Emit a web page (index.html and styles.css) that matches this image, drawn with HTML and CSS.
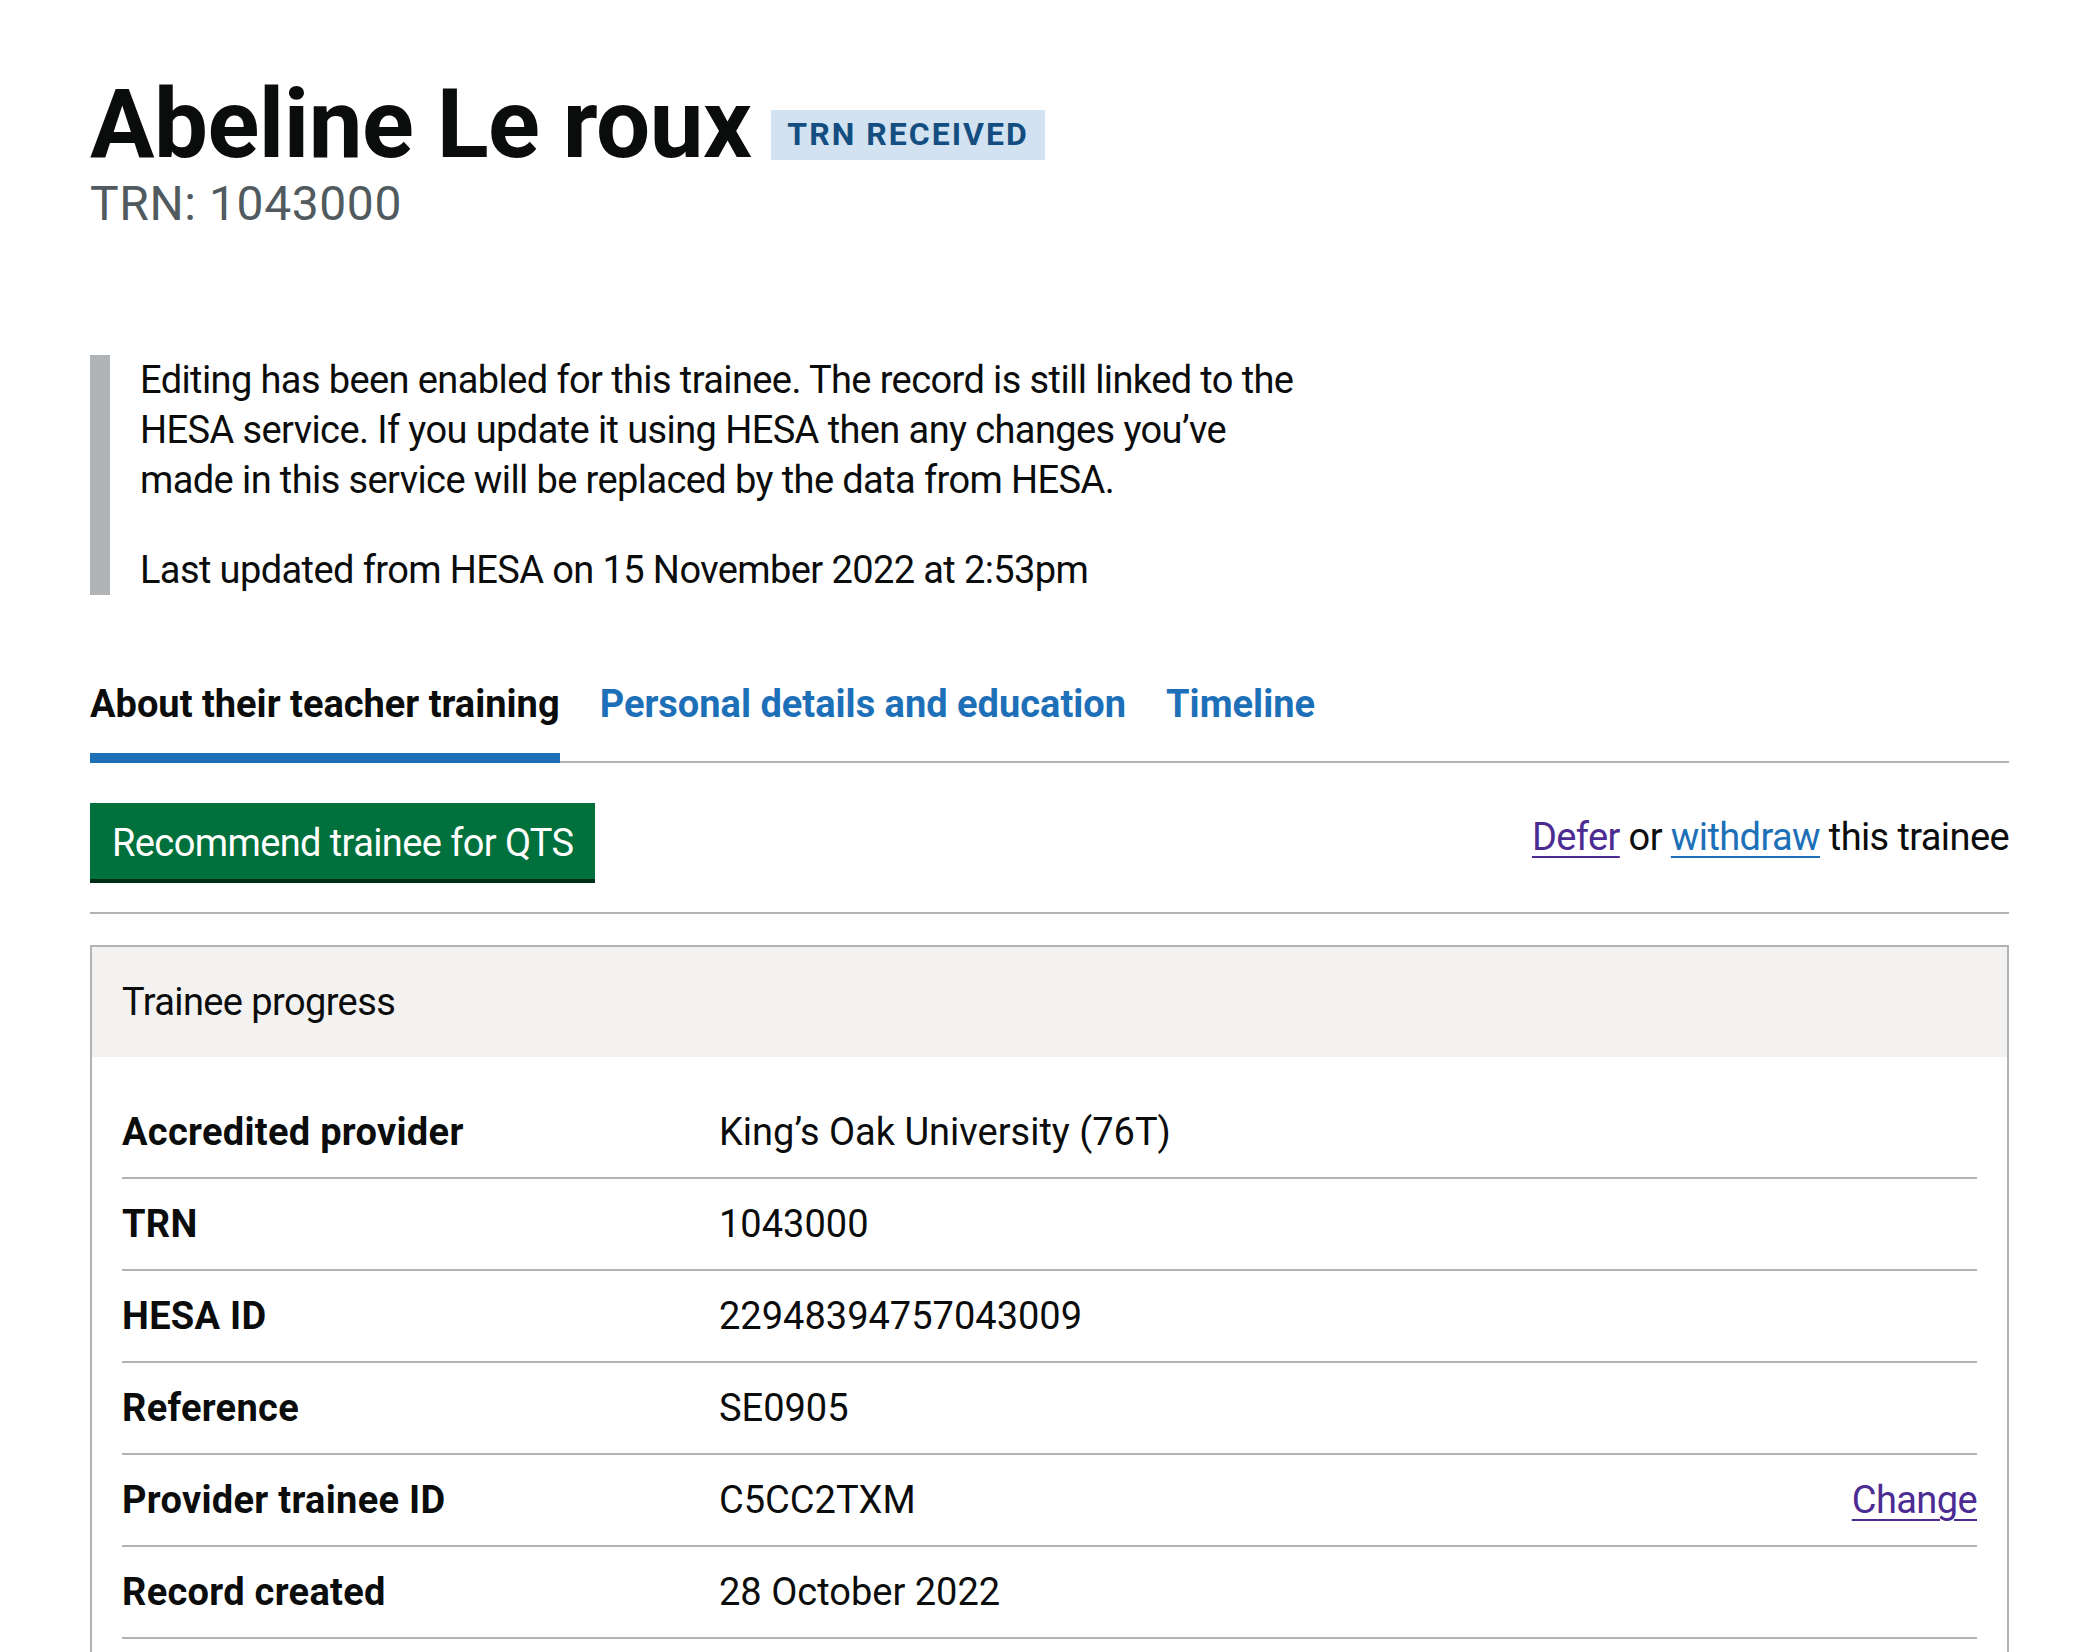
FILE: index.html
```html
<!DOCTYPE html>
<html lang="en">
<head>
<meta charset="utf-8">
<title>Abeline Le roux – Register trainee teachers</title>
<link rel="stylesheet" href="styles.css">
</head>
<body>
<main class="page">
  <header class="record-header">
    <h1 class="record-title"><span class="record-name">Abeline Le roux</span><strong class="tag">TRN received</strong></h1>
    <p class="caption">TRN: 1043000</p>
  </header>

  <div class="inset">
    <p class="inset-para">Editing has been enabled for this trainee. The record is still linked to the HESA service. If you update it using HESA then any changes you’ve made in this service will be replaced by the data from HESA.</p>
    <p class="inset-para">Last updated from HESA on 15 November 2022 at 2:53pm</p>
  </div>

  <nav class="subnav" aria-label="Trainee record">
    <ul class="subnav-list">
      <li class="subnav-item"><a class="subnav-link is-current" href="#" aria-current="page">About their teacher training</a></li>
      <li class="subnav-item"><a class="subnav-link" href="#">Personal details and education</a></li>
      <li class="subnav-item"><a class="subnav-link" href="#">Timeline</a></li>
    </ul>
  </nav>

  <div class="actions">
    <button class="button" type="button">Recommend trainee for QTS</button>
    <p class="actions-text"><a class="link link-visited" href="#">Defer</a> or <a class="link" href="#">withdraw</a> this trainee</p>
  </div>

  <hr class="divider">

  <section class="card">
    <div class="card-header">
      <h2 class="card-title">Trainee progress</h2>
    </div>
    <div class="card-body">
      <dl class="summary">
        <div class="summary-row">
          <dt class="summary-key">Accredited provider</dt>
          <dd class="summary-value">King’s Oak University (76T)</dd>
          <dd class="summary-actions"></dd>
        </div>
        <div class="summary-row">
          <dt class="summary-key">TRN</dt>
          <dd class="summary-value">1043000</dd>
          <dd class="summary-actions"></dd>
        </div>
        <div class="summary-row">
          <dt class="summary-key">HESA ID</dt>
          <dd class="summary-value">22948394757043009</dd>
          <dd class="summary-actions"></dd>
        </div>
        <div class="summary-row">
          <dt class="summary-key">Reference</dt>
          <dd class="summary-value">SE0905</dd>
          <dd class="summary-actions"></dd>
        </div>
        <div class="summary-row">
          <dt class="summary-key">Provider trainee ID</dt>
          <dd class="summary-value">C5CC2TXM</dd>
          <dd class="summary-actions"><a class="link link-visited" href="#">Change</a></dd>
        </div>
        <div class="summary-row">
          <dt class="summary-key">Record created</dt>
          <dd class="summary-value">28 October 2022</dd>
          <dd class="summary-actions"></dd>
        </div>
      </dl>
    </div>
  </section>
</main>
</body>
</html>
```

FILE: styles.css
```css
* {
  box-sizing: border-box;
}

html,
body {
  margin: 0;
  background: #ffffff;
}

body {
  font-family: Roboto, "Liberation Sans", Arial, sans-serif;
  color: #0b0c0c;
  font-size: 38px;
  line-height: 50px;
  letter-spacing: -0.6px;
}

.page {
  padding: 74px 83px 0 90px;
}

/* Heading */
.record-title {
  display: flex;
  align-items: flex-start;
  gap: 20px;
  margin: 0;
  font-size: 96px;
  line-height: 100px;
  font-weight: 700;
  letter-spacing: -0.5px;
}

.tag {
  display: block;
  margin-top: 36px;
  padding: 8px 16px 10px;
  font-size: 32px;
  line-height: 32px;
  font-weight: 700;
  letter-spacing: 2px;
  text-transform: uppercase;
  background: #d2e2f1;
  color: #144e81;
}

.caption {
  margin: 0;
  font-size: 48px;
  line-height: 60px;
  letter-spacing: 0.6px;
  color: #505a5f;
}

/* Inset */
.inset {
  margin-top: 121px;
  max-width: 1225px;
  border-left: 20px solid #b1b4b6;
  padding-left: 30px;
}

.inset-para {
  margin: 0;
}

.inset-para + .inset-para {
  margin-top: 40px;
}

/* Secondary navigation */
.subnav {
  margin-top: 84px;
  box-shadow: inset 0 -2px 0 #b1b4b6;
}

.subnav-list {
  display: flex;
  gap: 40px;
  margin: 0;
  padding: 0;
  list-style: none;
}

.subnav-link {
  display: block;
  padding-bottom: 24px;
  border-bottom: 10px solid transparent;
  font-weight: 700;
  letter-spacing: 0;
  color: #1d70b8;
  text-decoration: none;
}

.subnav-link.is-current {
  color: #0b0c0c;
  border-bottom-color: #1d70b8;
}

/* Actions */
.actions {
  display: flex;
  justify-content: space-between;
  align-items: flex-start;
  margin-top: 40px;
}

.button {
  margin: 0;
  padding: 18px 20px 14px;
  border: 2px solid transparent;
  border-radius: 0;
  background: #00703c;
  color: #ffffff;
  box-shadow: 0 4px 0 #002d18;
  font-family: inherit;
  font-size: 38px;
  line-height: 40px;
  letter-spacing: -0.6px;
  cursor: pointer;
}

.actions-text {
  margin: 9px 0 0;
}

.link {
  color: #1d70b8;
  text-decoration: underline;
  text-decoration-thickness: 2px;
  text-underline-offset: 6px;
}

.link-visited {
  color: #4c2c92;
}

.divider {
  margin: 33px 0 0;
  height: 2px;
  border: 0;
  background: #b1b4b6;
}

/* Summary card */
.card {
  margin-top: 31px;
  border: 2px solid #b1b4b6;
}

.card-header {
  background: #f3f2f1;
  padding: 30px;
}

.card-title {
  margin: 0;
  font-size: 38px;
  line-height: 50px;
  font-weight: 400;
}

.card-body {
  padding: 30px 30px 30px;
}

.summary {
  margin: 0;
}

.summary-row {
  display: grid;
  grid-template-columns: 597px 1fr auto;
  border-bottom: 2px solid #b1b4b6;
}

.summary-key,
.summary-value,
.summary-actions {
  margin: 0;
  padding: 20px 0;
}

.summary-key {
  font-weight: 700;
  letter-spacing: 0.3px;
}

.summary-value {
  letter-spacing: 0;
}

.summary-actions {
  text-align: right;
}
```
